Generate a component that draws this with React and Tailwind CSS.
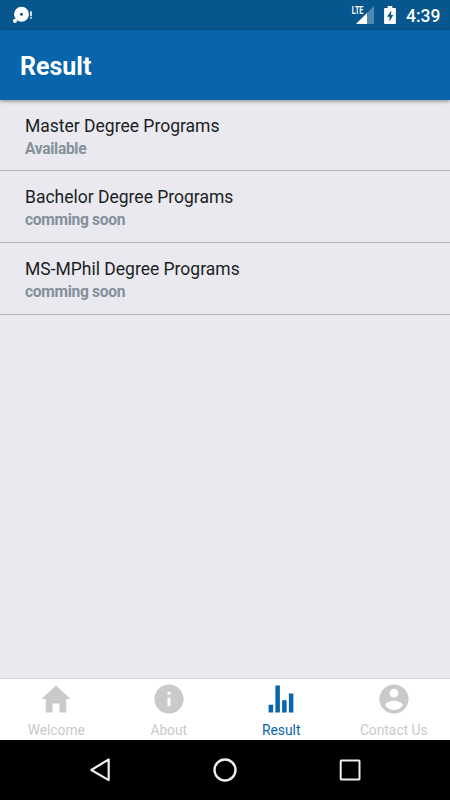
import React from "react";

const programs = [
  { name: "Master Degree Programs", status: "Available" },
  { name: "Bachelor Degree Programs", status: "comming soon" },
  { name: "MS-MPhil Degree Programs", status: "comming soon" },
];

const tabs = [
  {
    label: "Welcome",
    path: "M208 448V320h96v128h97.6V256H464L256 64 48 256h62.4v192z",
  },
  {
    label: "About",
    path: "M256 48C141.2 48 48 141.2 48 256s93.2 208 208 208 208-93.2 208-208S370.8 48 256 48zm21 312h-42V235h42v125zm0-166h-42v-42h42v42z",
  },
  {
    label: "Result",
    path: "M80 336h64v112H80zM176 64h64v384h-64zM272 272h64v176h-64zM368 176h64v272h-64z",
  },
  {
    label: "Contact Us",
    path: "M256 48C141.1 48 48 141.1 48 256s93.1 208 208 208 208-93.1 208-208S370.9 48 256 48zm0 62.4c34.4 0 62.4 28 62.4 62.4s-28 62.4-62.4 62.4-62.4-28-62.4-62.4 28-62.4 62.4-62.4zm0 300.4c-52 0-97.8-27-124.8-66.6.6-41.4 83.2-64.1 124.8-64.1s124.2 22.7 124.8 64.1c-27 39.7-72.8 66.6-124.8 66.6z",
  },
];

function StatusBar() {
  return (
    <div className="flex h-[30px] shrink-0 items-center bg-[#08568e] pl-3 pr-[10px] text-white">
      {/* Notification */}
      <svg className="h-5 w-6" viewBox="0 0 24 20">
        <circle cx="9.5" cy="9.3" r="4.5" fill="none" stroke="white" strokeWidth="6" />
        <circle cx="3" cy="15.8" r="2.1" fill="white" />
        <path d="M18.2 6.2h1.6v5h-1.6zM18.2 12.2h1.6v1.6h-1.6z" fill="white" />
      </svg>

      {/* Signal */}
      <svg className="ml-auto h-[26px] w-6" viewBox="0 -3 24 26">
        <path d="M23 1V19H5z" fill="white" fillOpacity="0.3" />
        <path d="M16 8V19H5z" fill="white" />
        <rect x="0" y="0" width="13" height="10" fill="#08568e" />
        <text
          x="0.8"
          y="9.2"
          fontFamily="Roboto, sans-serif"
          fontSize="11.5"
          fontWeight="700"
          textLength="11.6"
          lengthAdjust="spacingAndGlyphs"
          fill="white"
        >
          LTE
        </text>
      </svg>

      {/* Battery */}
      <svg className="ml-[9px] h-5 w-3" viewBox="0 0 12 20">
        <path
          fillRule="evenodd"
          d="M3.7 1h4.6v2h2.9q.7 0 .7.7v14.6q0 .7-.7.7H.8q-.7 0-.7-.7V3.7Q.1 3 .8 3h2.9zM7.4 5.6 3 11.8h2.5v4.7L9.3 10H7z"
          fill="white"
        />
      </svg>
      <span className="ml-[10px] w-[34px] whitespace-nowrap pt-[3px] text-[17.5px] font-medium leading-none">
        4:39
      </span>
    </div>
  );
}

function TabBar({ active }) {
  return (
    <nav className="grid h-[62px] shrink-0 grid-cols-4 border-t border-[#d3d3d9] bg-white">
      {tabs.map((tab) => (
        <button
          key={tab.label}
          className={`flex flex-col items-center pt-[2px] ${
            tab.label === active ? "text-[#0865ab]" : "text-[#cacaca]"
          }`}
        >
          <svg className="size-9" viewBox="0 0 512 512" fill="currentColor">
            <path d={tab.path} />
          </svg>
          <span className="mt-[3px] text-[13.8px] leading-[20px]">{tab.label}</span>
        </button>
      ))}
    </nav>
  );
}

function NavigationBar() {
  return (
    <div className="flex h-[60px] shrink-0 items-center justify-between bg-black px-[88px]">
      <svg className="size-6" viewBox="0 0 24 24" fill="none" stroke="#eeeeee" strokeWidth="2.2" strokeLinejoin="round">
        <path d="M20.7 1.4V22.1L3.3 12z" />
      </svg>
      <svg className="size-6" viewBox="0 0 24 24" fill="none" stroke="#eeeeee" strokeWidth="2.4">
        <circle cx="12" cy="12" r="10.5" />
      </svg>
      <svg className="size-6" viewBox="0 0 24 24" fill="none" stroke="#eeeeee" strokeWidth="2">
        <rect x="2.7" y="2.6" width="18.8" height="18.8" rx="0.6" />
      </svg>
    </div>
  );
}

export default function App() {
  return (
    <div className="flex h-screen flex-col bg-[#e9e9ef] font-['Roboto',sans-serif]">
      <StatusBar />
      <header className="flex h-[70px] shrink-0 items-center bg-[#0865ab] px-5 pt-[3px] shadow-[0_1px_4px_rgba(0,0,0,0.45)]">
        <h1 className="text-[25px] font-bold leading-none text-white">Result</h1>
      </header>

      <main className="flex-1">
        {programs.map((program) => (
          <div
            key={program.name}
            className="h-[72px] border-b border-[#b4b4b6] pl-[25px] pt-[14px] first:h-[71px]"
          >
            <h2 className="text-[17.5px] leading-6 text-[#1b1f24]">{program.name}</h2>
            <p className="text-[15.6px] font-bold leading-[23px] tracking-[-0.32px] text-[#84919b]">
              {program.status}
            </p>
          </div>
        ))}
      </main>

      <TabBar active="Result" />
      <NavigationBar />
    </div>
  );
}
